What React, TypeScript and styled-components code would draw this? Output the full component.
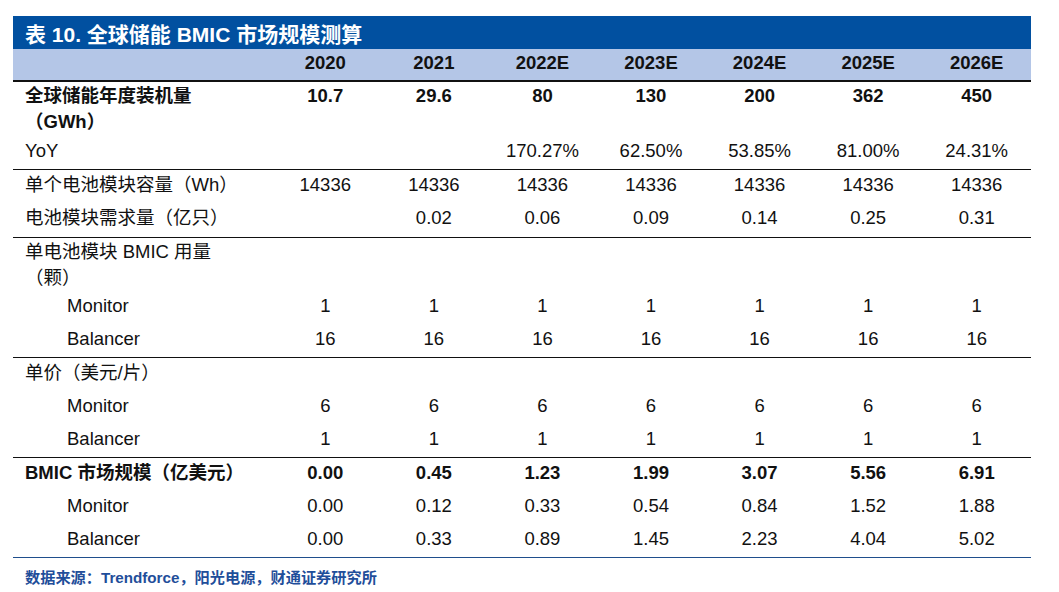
import React from "react";
import styled, { createGlobalStyle } from "styled-components";

const GlobalStyle = createGlobalStyle`
  html, body {
    margin: 0;
    padding: 0;
    background: #ffffff;
  }
  body {
    font-family: "Liberation Sans", "Noto Sans CJK SC", sans-serif;
    color: #111111;
  }
`;

const Page = styled.div`
  width: 1059px;
  height: 592px;
  box-sizing: border-box;
  padding: 16px 0 0 13px;
`;

const Sheet = styled.div`
  width: 1018px;
`;

const TitleBar = styled.div`
  height: 33px;
  display: flex;
  align-items: center;
  padding-left: 12px;
  background: #0150a0;
  color: #ffffff;
  font-size: 21px;
  font-weight: bold;
`;

const Grid = styled.div<{ $height?: number }>`
  display: grid;
  grid-template-columns: 258px repeat(7, 1fr);
  height: ${({ $height }) => $height ?? 33}px;
`;

const HeaderRow = styled(Grid)`
  background: #b4c6e7;
  border-bottom: 2px solid #111111;
  box-sizing: border-box;
  font-weight: bold;
  font-size: 18.5px;
`;

const HeaderCell = styled.div`
  display: flex;
  align-items: center;
  justify-content: center;
  padding-bottom: 3px;
`;

const Section = styled.div<{ $last?: boolean }>`
  border-bottom: 1px solid ${({ $last }) => ($last ? "#1f4e8c" : "#111111")};
`;

const Label = styled.div<{ $indent?: boolean; $bold?: boolean; $multi?: boolean }>`
  padding-left: ${({ $indent }) => ($indent ? 54 : 12)}px;
  font-size: 18.5px;
  font-weight: ${({ $bold }) => ($bold ? "bold" : "normal")};
  line-height: ${({ $multi }) => ($multi ? 26 : 29)}px;
  padding-top: ${({ $multi }) => ($multi ? 1 : 0)}px;
  white-space: nowrap;
`;

const Value = styled.div<{ $bold?: boolean; $multi?: boolean }>`
  text-align: center;
  font-size: 18.5px;
  font-weight: ${({ $bold }) => ($bold ? "bold" : "normal")};
  line-height: ${({ $multi }) => ($multi ? 26 : 29)}px;
  padding-top: ${({ $multi }) => ($multi ? 1 : 0)}px;
`;

const Source = styled.div`
  padding: 7px 0 0 12px;
  color: #1f4e9a;
  font-size: 15.2px;
  font-weight: bold;
`;

type RowData = {
  label: React.ReactNode;
  values: string[];
  indent?: boolean;
  bold?: boolean;
  height?: number;
};

const years = ["2020", "2021", "2022E", "2023E", "2024E", "2025E", "2026E"];
const blank = ["", "", "", "", "", "", ""];

const sections: RowData[][] = [
  [
    {
      label: (
        <>
          全球储能年度装机量
          <br />（GWh）
        </>
      ),
      values: ["10.7", "29.6", "80", "130", "200", "362", "450"],
      bold: true,
      height: 54,
    },
    {
      label: "YoY",
      values: ["", "", "170.27%", "62.50%", "53.85%", "81.00%", "24.31%"],
    },
  ],
  [
    {
      label: "单个电池模块容量（Wh）",
      values: ["14336", "14336", "14336", "14336", "14336", "14336", "14336"],
    },
    {
      label: "电池模块需求量（亿只）",
      values: ["", "0.02", "0.06", "0.09", "0.14", "0.25", "0.31"],
      height: 34,
    },
  ],
  [
    {
      label: (
        <>
          单电池模块 BMIC 用量
          <br />（颗）
        </>
      ),
      values: blank,
      height: 53,
    },
    { label: "Monitor", indent: true, values: ["1", "1", "1", "1", "1", "1", "1"] },
    { label: "Balancer", indent: true, values: ["16", "16", "16", "16", "16", "16", "16"] },
  ],
  [
    { label: "单价（美元/片）", values: blank },
    { label: "Monitor", indent: true, values: ["6", "6", "6", "6", "6", "6", "6"] },
    { label: "Balancer", indent: true, values: ["1", "1", "1", "1", "1", "1", "1"] },
  ],
  [
    {
      label: "BMIC 市场规模（亿美元）",
      bold: true,
      values: ["0.00", "0.45", "1.23", "1.99", "3.07", "5.56", "6.91"],
    },
    {
      label: "Monitor",
      indent: true,
      values: ["0.00", "0.12", "0.33", "0.54", "0.84", "1.52", "1.88"],
    },
    {
      label: "Balancer",
      indent: true,
      values: ["0.00", "0.33", "0.89", "1.45", "2.23", "4.04", "5.02"],
    },
  ],
];

const App = () => {
  return (
    <Page>
      <GlobalStyle />
      <Sheet>
        <TitleBar>表 10. 全球储能 BMIC 市场规模测算</TitleBar>
        <HeaderRow>
          <HeaderCell />
          {years.map((y) => (
            <HeaderCell key={y}>{y}</HeaderCell>
          ))}
        </HeaderRow>
        {sections.map((rows, si) => (
          <Section key={si} $last={si === sections.length - 1}>
            {rows.map((row, ri) => {
              const multi = (row.height ?? 33) > 40;
              return (
                <Grid key={ri} $height={row.height}>
                  <Label $indent={row.indent} $bold={row.bold} $multi={multi}>
                    {row.label}
                  </Label>
                  {row.values.map((v, vi) => (
                    <Value key={vi} $bold={row.bold} $multi={multi}>
                      {v}
                    </Value>
                  ))}
                </Grid>
              );
            })}
          </Section>
        ))}
        <Source>数据来源：Trendforce，阳光电源，财通证券研究所</Source>
      </Sheet>
    </Page>
  );
};

export default App;
